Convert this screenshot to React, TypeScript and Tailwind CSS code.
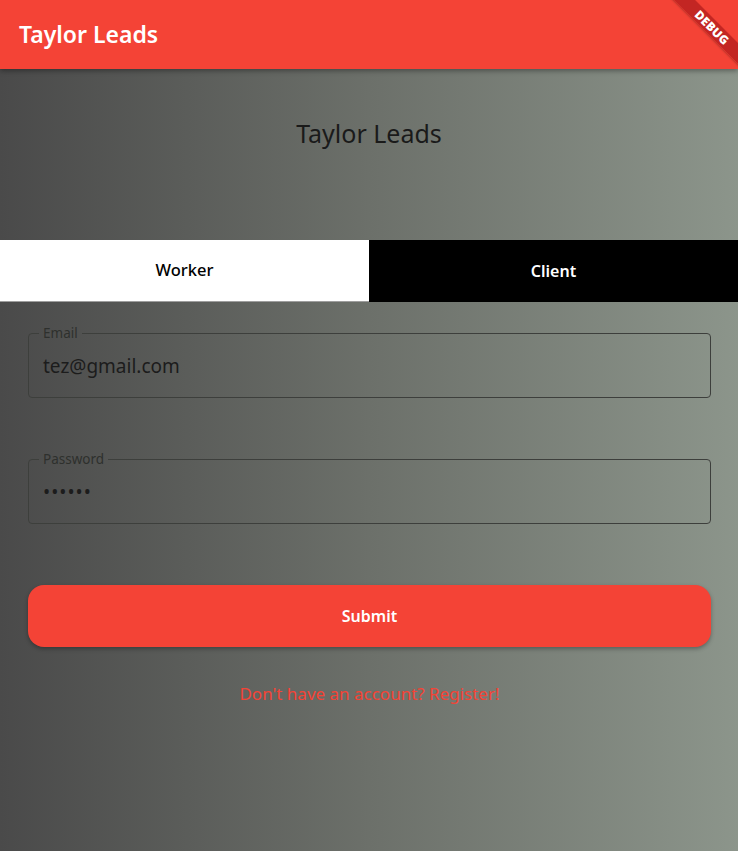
import React from 'react';

const font = { fontFamily: '"Segoe UI", "Noto Sans", "Open Sans", sans-serif' };

function DebugBanner() {
  return (
    <div className="pointer-events-none absolute right-0 top-0 z-20 h-20 w-20 overflow-hidden">
      <div className="absolute left-[-6px] top-[20px] flex h-[15px] w-[120px] rotate-45 items-center justify-center bg-[#b01c1cb8] shadow-[0_1px_2px_rgba(0,0,0,0.25)]">
        <span className="text-[12px] font-black leading-none tracking-[0.3px] text-white">DEBUG</span>
      </div>
    </div>
  );
}

function OutlinedField({ label, value, password }: { label: string; value: string; password?: boolean }) {
  return (
    <fieldset className="rounded-[4px] border border-[#3d3f3c] pb-[19px] pl-[14px] pr-[14px] pt-[12px]">
      <legend className="ml-[-4px] px-[4px] text-[13.5px] leading-[18px] text-[#2e302d]">{label}</legend>
      <div
        className={
          password
            ? 'text-[19px] leading-[24px] tracking-[1px] text-[#1c1c1c]'
            : 'text-[19px] leading-[24px] text-[#1c1c1c]'
        }
      >
        {value}
      </div>
    </fieldset>
  );
}

export default function App() {
  return (
    <div className="relative flex min-h-[851px] flex-col" style={font}>
      <header className="relative z-10 flex h-[69px] items-center bg-[#f44336] px-[19px] shadow-[0_2px_5px_rgba(0,0,0,0.35)]">
        <h1 className="text-[23px] font-semibold text-white">Taylor Leads</h1>
      </header>
      <main className="flex flex-1 flex-col bg-gradient-to-r from-[#4a4a4a] via-[#6c706a] to-[#8c958b]">
        <h2 className="pt-[48px] text-center text-[25px] leading-[32px] text-[#1a1a1a]">Taylor Leads</h2>
        <div className="mt-[91px] flex h-[62px]">
          <button className="flex flex-1 items-center justify-center border-b border-[#9e9e9e] bg-white text-[16.5px] font-medium text-black">
            Worker
          </button>
          <button className="flex flex-1 items-center justify-center bg-black text-[16px] font-semibold text-white">
            Client
          </button>
        </div>
        <div className="flex flex-col pl-[28px] pr-[27px]">
          <div className="mt-[22px]">
            <OutlinedField label="Email" value="tez@gmail.com" />
          </div>
          <div className="mt-[52px]">
            <OutlinedField label="Password" value="••••••" password />
          </div>
          <button className="mt-[61px] flex h-[62px] items-center justify-center rounded-[16px] bg-[#f44336] text-[16px] font-semibold text-white shadow-[0_2px_4px_rgba(0,0,0,0.3)]">
            Submit
          </button>
          <p className="mt-[36px] text-center text-[17px] leading-[22px] text-[#f44336]">Don't have an account? Register!</p>
        </div>
      </main>
      <DebugBanner />
    </div>
  );
}
